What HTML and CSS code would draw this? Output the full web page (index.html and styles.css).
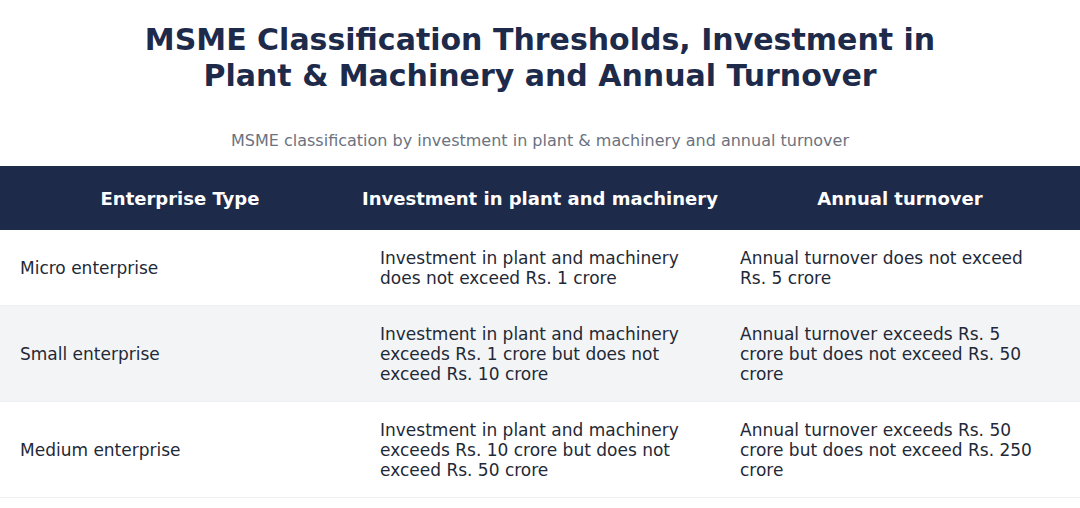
FILE: index.html
```html
<!DOCTYPE html>
<html lang="en">
<head>
<meta charset="utf-8">
<title>MSME Classification Thresholds</title>
<link rel="stylesheet" href="styles.css">
</head>
<body>
<main class="page">
  <h1 class="title">MSME Classification Thresholds, Investment in<br>Plant &amp; Machinery and Annual Turnover</h1>
  <p class="subtitle">MSME classification by investment in plant &amp; machinery and annual turnover</p>
  <table class="grid">
    <thead>
      <tr>
        <th>Enterprise Type</th>
        <th>Investment in plant and machinery</th>
        <th>Annual turnover</th>
      </tr>
    </thead>
    <tbody>
      <tr>
        <td>Micro enterprise</td>
        <td>Investment in plant and machinery does not exceed Rs. 1 crore</td>
        <td>Annual turnover does not exceed Rs. 5 crore</td>
      </tr>
      <tr class="alt">
        <td>Small enterprise</td>
        <td>Investment in plant and machinery exceeds Rs. 1 crore but does not exceed Rs. 10 crore</td>
        <td>Annual turnover exceeds Rs. 5 crore but does not exceed Rs. 50 crore</td>
      </tr>
      <tr>
        <td>Medium enterprise</td>
        <td>Investment in plant and machinery exceeds Rs. 10 crore but does not exceed Rs. 50 crore</td>
        <td>Annual turnover exceeds Rs. 50 crore but does not exceed Rs. 250 crore</td>
      </tr>
    </tbody>
  </table>
</main>
</body>
</html>
```

FILE: styles.css
```css
html, body {
  margin: 0;
  padding: 0;
  background: #ffffff;
}

body {
  font-family: "DejaVu Sans", Verdana, sans-serif;
  color: #1f2937;
}

.page {
  display: flex;
  flex-direction: column;
  padding-top: 22px;
}

.title {
  margin: 0;
  font-size: 30px;
  line-height: 36px;
  font-weight: bold;
  color: #1e2a4a;
  text-align: center;
}

.subtitle {
  margin: 37px 0 15px;
  font-size: 16px;
  line-height: 20px;
  color: #6b7280;
  text-align: center;
}

.grid {
  width: 100%;
  border-collapse: collapse;
  table-layout: fixed;
}

.grid th {
  background: #1e2a4a;
  color: #ffffff;
  font-size: 18px;
  font-weight: bold;
  height: 64px;
  padding: 0;
  text-align: center;
  vertical-align: middle;
  white-space: nowrap;
}

.grid td {
  font-size: 17px;
  line-height: 20px;
  padding: 18px 40px 17px 20px;
  vertical-align: middle;
  text-align: left;
  border-bottom: 1px solid #eceef1;
}

.grid tbody tr.alt td {
  background: #f3f4f6;
}
```
